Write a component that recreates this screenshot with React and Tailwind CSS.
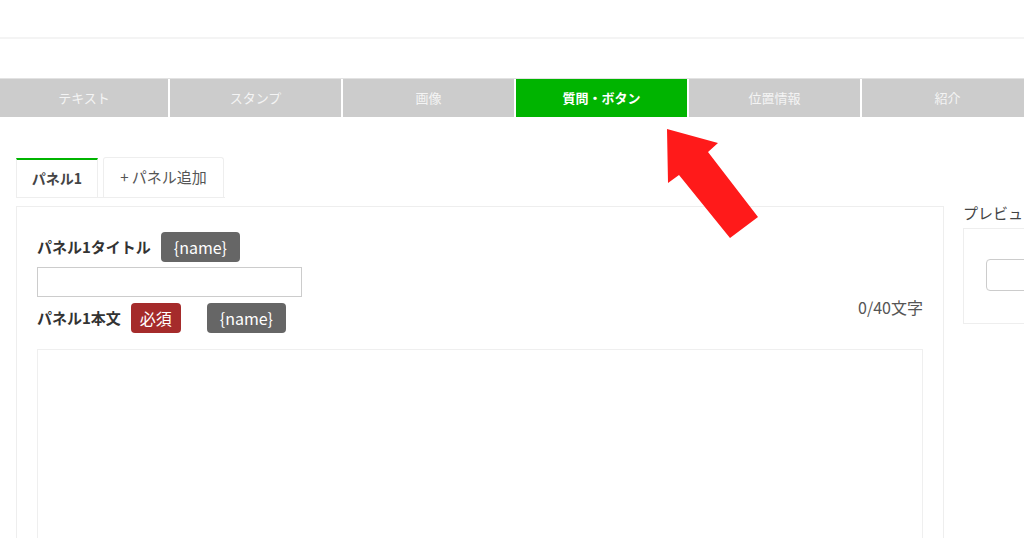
const font = { fontFamily: '"Noto Sans CJK JP", "Noto Sans", sans-serif' };

const menuTabs = ['テキスト', 'スタンプ', '画像', '質問・ボタン', '位置情報', '紹介'];

const Badge = ({ children, className = '' }) => (
  <span className={`inline-flex h-[30px] items-center justify-center rounded-[4px] text-[16px] text-white ${className}`}>
    {children}
  </span>
);

const App = () => {
  return (
    <div className="relative h-[538px] w-[1024px] overflow-hidden bg-white text-[#333]" style={font}>
      {/* header */}
      <div className="h-[39px] border-b-2 border-[#f4f4f4]" />

      {/* menu tabs */}
      <div className="mt-[39px] flex h-[39px] border-t border-[#e2e2e2]">
        {menuTabs.map((t, i) => (
          <div
            key={t}
            className={`flex shrink-0 items-center justify-center text-[13px] ${
              i === 0 ? 'w-[168px]' : 'w-[173px] border-l-2 border-white'
            } ${i === 3 ? 'bg-[#00b400] font-bold text-white' : 'bg-[#cccccc] text-[#f4f4f4]'}`}
          >
            {t}
          </div>
        ))}
      </div>

      <div className="px-[16px] pt-[40px]">
        {/* panel tabs */}
        <div className="flex w-[209px] items-end gap-[5px] border-b border-[#eeeeee]">
          <div className="flex h-[39px] w-[82px] items-center justify-center border-x border-t-2 border-x-[#eeeeee] border-t-[#00b400] text-[14px] font-bold text-[#444]">
            パネル1
          </div>
          <div className="flex h-[40px] w-[121px] items-center justify-center rounded-t-[3px] border border-b-0 border-[#eeeeee] text-[15px] text-[#555]">
            + パネル追加
          </div>
        </div>

        <div className="mt-[8px] flex gap-[19px]">
          {/* editor panel */}
          <div className="h-[340px] w-[928px] shrink-0 border border-[#eeeeee] px-[20px] pt-[25px]">
            <div className="flex items-center">
              <span className="text-[15px] font-bold text-[#333]">パネル1タイトル</span>
              <Badge className="ml-[10px] w-[79px] bg-[#666666]">{'{name}'}</Badge>
            </div>
            <div className="mt-[5px] h-[30px] w-[265px] border border-[#cccccc]" />
            <div className="mt-[6px] flex items-start justify-between">
              <div className="flex items-center">
                <span className="text-[15px] font-bold text-[#333]">パネル1本文</span>
                <Badge className="ml-[10px] w-[50px] bg-[#a52b2b] text-[15px]">必須</Badge>
                <Badge className="ml-[26px] w-[79px] bg-[#666666]">{'{name}'}</Badge>
              </div>
              <span className="-mt-[8px] text-[16px] text-[#555]">0/40文字</span>
            </div>
            <div className="mt-[16px] h-[220px] w-[886px] border border-[#efefef]" />
          </div>

          {/* preview */}
          <div className="w-[120px] shrink-0">
            <div className="-mt-[4px] text-[15px] leading-[22px] text-[#444]">プレビュー</div>
            <div className="mt-[4px] h-[96px] border border-[#eeeeee] pl-[22px] pt-[30px]">
              <div className="h-[32px] rounded-[4px] border border-[#cccccc]" />
            </div>
          </div>
        </div>
      </div>

      {/* annotation arrow */}
      <svg className="absolute left-0 top-0" width="1024" height="538" viewBox="0 0 1024 538">
        <polygon
          points="667,129 718,143 708,152 758,217 730,238 679,175 668,183"
          fill="#ff1a1a"
        />
      </svg>
    </div>
  );
};

export default App;
